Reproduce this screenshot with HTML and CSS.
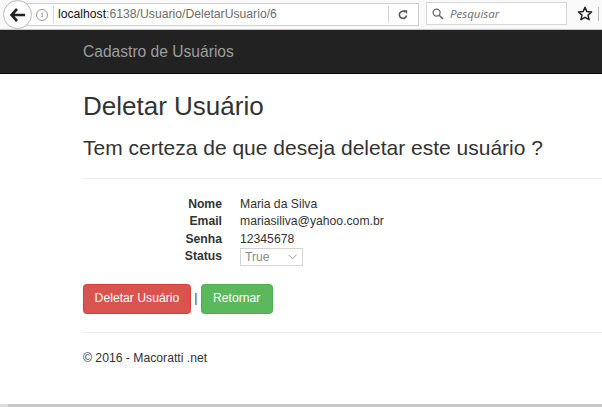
FILE: index.html
```html
<!DOCTYPE html>
<html lang="pt-BR">
<head>
<meta charset="utf-8">
<title>Deletar Usuário</title>
<link rel="stylesheet" href="styles.css">
</head>
<body>
<div class="browser-bar">
  <div class="back-btn">
    <svg width="16" height="14" viewBox="0 0 16 14"><path d="M7 1 L1.5 7 L7 13 M2 7 H15" fill="none" stroke="#222" stroke-width="2.6" stroke-linejoin="miter"/></svg>
  </div>
  <div class="url-field">
    <span class="info-icon">i</span>
    <span class="url-sep"></span>
    <span class="url-text"><span class="host">localhost</span>:6138/Usuario/DeletarUsuario/6</span>
    <span class="url-sep sep-right"></span>
    <svg class="reload" width="12" height="12" viewBox="0 0 12 12"><path d="M9.5 6.5 A3.6 3.6 0 1 1 8.3 3" fill="none" stroke="#555" stroke-width="1.6"/><path d="M6.5 1.2 H10.2 V4.9 Z" fill="#555"/></svg>
  </div>
  <div class="search-field">
    <svg width="12" height="12" viewBox="0 0 12 12"><circle cx="4.6" cy="4.6" r="3.5" fill="none" stroke="#666" stroke-width="1.3"/><path d="M7.2 7.2 L11 11" stroke="#666" stroke-width="1.6"/></svg>
    <span class="search-text">Pesquisar</span>
  </div>
  <svg class="star" width="16" height="16" viewBox="0 0 16 16"><path d="M8 1.3 L9.9 5.6 L14.6 6 L11 9.1 L12.1 13.7 L8 11.3 L3.9 13.7 L5 9.1 L1.4 6 L6.1 5.6 Z" fill="none" stroke="#222" stroke-width="1.5" stroke-linejoin="round"/></svg>
  <span class="bar-edge"></span>
</div>

<nav class="navbar">
  <div class="container">
    <span class="brand">Cadastro de Usuários</span>
  </div>
</nav>

<main class="container body-content">
  <h2 class="title">Deletar Usuário</h2>
  <h3 class="question">Tem certeza de que deseja deletar este usuário ?</h3>
  <div class="details">
    <hr class="rule">
    <dl class="dl-horizontal">
      <dt>Nome</dt><dd>Maria da Silva</dd>
      <dt>Email</dt><dd>mariasiliva@yahoo.com.br</dd>
      <dt>Senha</dt><dd>12345678</dd>
      <dt>Status</dt><dd><span class="select">True<svg width="9" height="6" viewBox="0 0 9 6"><path d="M0.5 0.8 L4.5 4.8 L8.5 0.8" fill="none" stroke="#999" stroke-width="1"/></svg></span></dd>
    </dl>
    <div class="actions">
      <button class="btn btn-danger">Deletar Usuário</button> | <a class="btn btn-success">Retornar</a>
    </div>
  </div>
  <footer class="footer">
    <hr class="rule">
    <p>© 2016 - Macoratti .net</p>
  </footer>
</main>
<div class="window-edge"></div>
</body>
</html>
```

FILE: styles.css
```css
html, body {
  margin: 0;
  padding: 0;
  height: 100%;
}
body {
  display: flex;
  flex-direction: column;
  font-family: "Liberation Sans", Arial, sans-serif;
  font-size: 12.2px;
  line-height: 17.4px;
  color: #333;
  background: #fff;
  overflow: hidden;
}

/* Browser toolbar */
.browser-bar {
  height: 29px;
  flex: none;
  display: flex;
  align-items: flex-start;
  background: #f9f9fa;
  border-bottom: 1px solid #c9c9c9;
  box-sizing: content-box;
  position: relative;
}
.back-btn {
  width: 27px;
  height: 27px;
  margin-left: 3px;
  border: 1px solid #b8b8b8;
  border-radius: 50%;
  background: #fff;
  display: flex;
  align-items: center;
  justify-content: center;
  z-index: 2;
  flex: none;
}
.url-field {
  margin-left: -6px;
  margin-top: 3px;
  width: 392px;
  height: 21px;
  border: 1px solid #cfcfcf;
  border-left: none;
  background: #fff;
  display: flex;
  align-items: center;
  font-family: "Liberation Sans", Arial, sans-serif;
  font-size: 12.2px;
  color: #6d6d6d;
  box-sizing: content-box;
}
.info-icon {
  margin-left: 10px;
  width: 10px;
  height: 10px;
  border: 1px solid #999;
  border-radius: 50%;
  font-family: "DejaVu Serif", serif;
  font-size: 8px;
  line-height: 10px;
  text-align: center;
  color: #888;
}
.url-sep {
  width: 1px;
  height: 17px;
  background: #d6d6d6;
  margin-left: 5px;
}
.url-text {
  margin-left: 4px;
  flex: 1;
  white-space: nowrap;
}
.host { color: #111; }
.sep-right { margin-left: 0; margin-right: 8px; }
.reload { margin-right: 9px; }
.search-field {
  margin-left: 7px;
  margin-top: 2px;
  width: 139px;
  height: 21px;
  border: 1px solid #d6d6d6;
  background: #fff;
  display: flex;
  align-items: center;
  box-sizing: content-box;
}
.search-field svg { margin-left: 5px; }
.search-text {
  margin-left: 6px;
  font-family: "Open Sans", sans-serif;
  font-style: italic;
  font-size: 11.5px;
  color: #6e6e6e;
}
.star { margin-left: 10px; margin-top: 6px; }
.bar-edge {
  margin-left: 5px;
  margin-top: 7px;
  width: 1px;
  height: 14px;
  background: #bbb;
}

/* Navbar */
.navbar {
  flex: none;
  height: 43px;
  background: #222;
  border-bottom: 1px solid #080808;
}
.container {
  padding-left: 83px;
  padding-right: 0;
}
.brand {
  display: block;
  font-size: 15.6px;
  line-height: 17px;
  padding-top: 13px;
  color: #9d9d9d;
}

/* Content */
.body-content { flex: 1; }
.title {
  margin: 18px 0 0;
  font-size: 26px;
  font-weight: 500;
  line-height: 28.6px;
  color: #333;
}
.question {
  margin: 15.6px 0 0;
  font-size: 21px;
  font-weight: 500;
  line-height: 23.1px;
  color: #333;
}
.rule {
  margin: 0;
  border: 0;
  border-top: 1px solid #eee;
  height: 0;
}
.details > .rule { margin-top: 18.7px; }
.dl-horizontal {
  margin: 17px 0 0;
  display: grid;
  grid-template-columns: 139px 1fr;
  column-gap: 18px;
}
.dl-horizontal dt {
  font-weight: bold;
  text-align: right;
  margin: 0;
}
.dl-horizontal dd { margin: 0; }
.select {
  display: inline-flex;
  align-items: center;
  justify-content: space-between;
  box-sizing: border-box;
  width: 63px;
  height: 18px;
  margin-top: 0px;
  padding: 0 5px 0 4px;
  border: 1px solid #d4d4d4;
  color: #8a8a8a;
  line-height: 16px;
  vertical-align: top;
}
.actions { margin-top: 18px; }
.btn {
  display: inline-block;
  box-sizing: border-box;
  height: 30px;
  padding: 5.3px 10.6px;
  border: 1px solid transparent;
  border-radius: 3.5px;
  font-family: "Liberation Sans", Arial, sans-serif;
  font-size: 12.2px;
  line-height: 17.4px;
  color: #fff;
  vertical-align: middle;
  cursor: pointer;
}
.btn-danger { background: #d9534f; border-color: #d43f3a; }
.btn-success { background: #5cb85c; border-color: #4cae4c; padding: 5.3px 11.2px; }
.footer > .rule { margin-top: 17.5px; }
.footer p { margin: 17px 0 0; }

.window-edge {
  flex: none;
  height: 3px;
  background: linear-gradient(to right, #dcdcdc 0, #dcdcdc 8px, #c8c8c8 8px);
}
```
